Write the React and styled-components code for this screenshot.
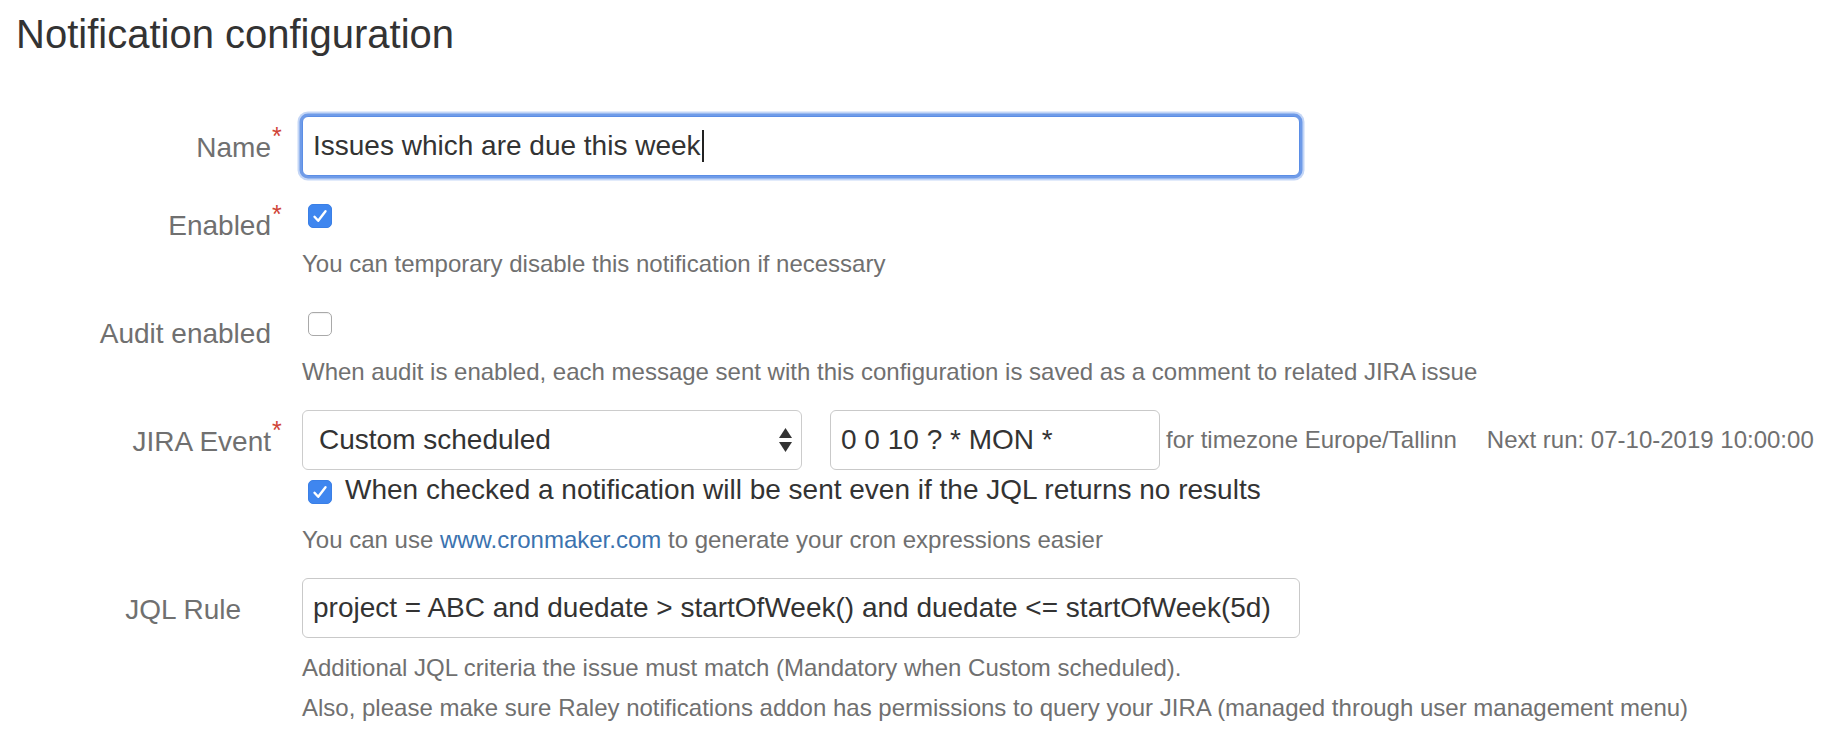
import React from "react";
import styled, { createGlobalStyle, css } from "styled-components";

const GlobalStyle = createGlobalStyle`
  html, body { margin: 0; padding: 0; background: #fff; }
  body { font-family: "Liberation Sans", Arial, Helvetica, sans-serif; color: #333; }
  *, *::before, *::after { box-sizing: border-box; }
`;

const Page = styled.div`
  width: 1832px;
  height: 734px;
  padding: 10px 0 0 16px;
  overflow: hidden;
`;

const Title = styled.h2`
  margin: 0 0 50px;
  font-size: 40px;
  line-height: 48px;
  font-weight: normal;
  color: #333;
`;

const Form = styled.form`
  display: block;
`;

const FieldGroup = styled.div`
  display: grid;
  grid-template-columns: 255px 1fr;
  column-gap: 31px;
  align-items: start;
  padding: 8px 0;
  margin-top: 2px;
`;

const Label = styled.label`
  position: relative;
  display: block;
  padding-top: 12px;
  padding-right: ${(p) => p.$indent || 0}px;
  text-align: right;
  font-size: 28px;
  line-height: 40px;
  color: #707070;
  white-space: nowrap;
`;

const Required = styled.span`
  position: absolute;
  left: calc(100% + 1px);
  top: 8px;
  font-size: 25px;
  line-height: 25px;
  color: #d04437;
`;

const FieldColumn = styled.div`
  display: flex;
  flex-direction: column;
  align-items: flex-start;
`;

const fieldBase = css`
  display: flex;
  align-items: center;
  height: 60px;
  padding: 0 10px;
  background: #fff;
  border: 1px solid #c9c9c9;
  border-radius: 6px;
  font-family: "Liberation Sans", Arial, Helvetica, sans-serif;
  font-size: 28px;
  color: #333;
  white-space: nowrap;
  outline: none;
`;

const TextBox = styled.div`
  ${fieldBase};
  width: ${(p) => p.$width}px;
  ${(p) =>
    p.$focused &&
    css`
      border-color: #5b8ee6;
      box-shadow: 0 0 0 2.5px #6f9be8, 0 0 0 4.5px rgba(124, 164, 235, 0.45);
    `}
`;

const TextInput = styled.input`
  ${fieldBase};
  width: ${(p) => p.$width}px;
  margin-left: ${(p) => p.$ml || 0}px;
`;

const Caret = styled.span`
  display: inline-block;
  width: 2px;
  height: 32px;
  margin-left: 1px;
  background: #222;
`;

const SelectBox = styled.div`
  ${fieldBase};
  width: 500px;
  justify-content: space-between;
  padding: 0 9px 0 16px;
  border-color: #cccccc;
`;

const ArrowsIcon = () => (
  <svg width="13" height="24" viewBox="0 0 13 24" aria-hidden="true">
    <polygon points="6.5,0 13,10 0,10" fill="#333" />
    <polygon points="0,14 13,14 6.5,24" fill="#333" />
  </svg>
);

const InlineRow = styled.div`
  display: flex;
  align-items: center;
  white-space: nowrap;
`;

const Aside = styled.span`
  margin-left: ${(p) => p.$ml || 0}px;
  font-size: 24px;
  color: #707070;
`;

const CheckLine = styled.div`
  display: flex;
  align-items: center;
  height: 40px;
  gap: 13px;
  font-size: 28px;
  color: #333;
  white-space: nowrap;
`;

const CheckBox = styled.span`
  display: inline-flex;
  align-items: center;
  justify-content: center;
  width: 24px;
  height: 24px;
  margin: 4px 0 0 6px;
  border-radius: 5px;
  ${(p) =>
    p.$checked
      ? css`
          background: #3f86ef;
          border: 1px solid #3a7fe6;
        `
      : css`
          background: #fff;
          border: 1px solid #a9a9a9;
          box-shadow: inset 0 1px 1px rgba(0, 0, 0, 0.06);
        `}
`;

const Check = ({ checked }) => (
  <CheckBox $checked={checked} role="checkbox" aria-checked={checked}>
    {checked && (
      <svg width="22" height="22" viewBox="0 0 22 22" aria-hidden="true">
        <path
          d="M5.5 11.8 L9.2 15.8 L16.5 6.2"
          fill="none"
          stroke="#fff"
          strokeWidth="2.4"
          strokeLinecap="round"
          strokeLinejoin="round"
        />
      </svg>
    )}
  </CheckBox>
);

const Description = styled.div`
  margin-top: 10px;
  font-size: 24px;
  line-height: 40px;
  color: #707070;
  white-space: nowrap;
`;

const Link = styled.a`
  color: #3b73af;
  text-decoration: none;
`;

export default function App() {
  return (
    <>
      <GlobalStyle />
      <Page>
        <Title>Notification configuration</Title>
        <Form onSubmit={(e) => e.preventDefault()}>
          <FieldGroup>
            <Label>
              Name<Required>*</Required>
            </Label>
            <FieldColumn>
              <TextBox $width={998} $focused>
                Issues which are due this week
                <Caret />
              </TextBox>
            </FieldColumn>
          </FieldGroup>

          <FieldGroup>
            <Label>
              Enabled<Required>*</Required>
            </Label>
            <FieldColumn>
              <CheckLine>
                <Check checked />
              </CheckLine>
              <Description>You can temporary disable this notification if necessary</Description>
            </FieldColumn>
          </FieldGroup>

          <FieldGroup>
            <Label>Audit enabled</Label>
            <FieldColumn>
              <CheckLine>
                <Check checked={false} />
              </CheckLine>
              <Description>
                When audit is enabled, each message sent with this configuration is saved as a comment to related JIRA issue
              </Description>
            </FieldColumn>
          </FieldGroup>

          <FieldGroup>
            <Label>
              JIRA Event<Required>*</Required>
            </Label>
            <FieldColumn>
              <InlineRow>
                <SelectBox>
                  <span>Custom scheduled</span>
                  <ArrowsIcon />
                </SelectBox>
                <TextInput $width={330} $ml={28} readOnly value="0 0 10 ? * MON *" />
                <Aside $ml={6}>for timezone Europe/Tallinn</Aside>
                <Aside $ml={30}>Next run: 07-10-2019 10:00:00</Aside>
              </InlineRow>
              <CheckLine>
                <Check checked />
                <span>When checked a notification will be sent even if the JQL returns no results</span>
              </CheckLine>
              <Description>
                You can use <Link href="#">www.cronmaker.com</Link> to generate your cron expressions easier
              </Description>
            </FieldColumn>
          </FieldGroup>

          <FieldGroup>
            <Label $indent={30}>JQL Rule</Label>
            <FieldColumn>
              <TextInput
                $width={998}
                readOnly
                value="project = ABC and duedate > startOfWeek() and duedate <= startOfWeek(5d)"
              />
              <Description>
                Additional JQL criteria the issue must match (Mandatory when Custom scheduled).
                <br />
                Also, please make sure Raley notifications addon has permissions to query your JIRA (managed through user management menu)
              </Description>
            </FieldColumn>
          </FieldGroup>
        </Form>
      </Page>
    </>
  );
}
